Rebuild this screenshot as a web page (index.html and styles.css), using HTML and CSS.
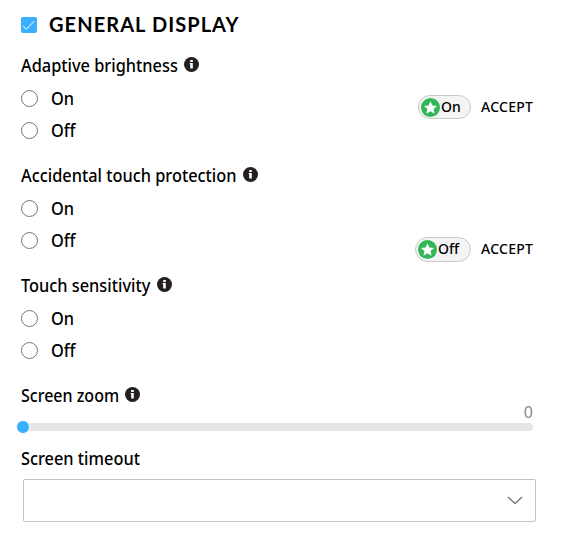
FILE: index.html
```html
<!DOCTYPE html>
<html lang="en">
<head>
<meta charset="utf-8">
<title>General display</title>
<link rel="stylesheet" href="styles.css">
</head>
<body>
<svg width="0" height="0" class="defs" aria-hidden="true">
  <symbol id="info" viewBox="0 0 15 15"><circle cx="7.5" cy="7.5" r="7.5" fill="#231f20"/><path d="M6.2 3h2.6v2H6.2zM5.7 6h3.1v5.5H6.2V7.2h-.5z" fill="#fff"/></symbol>
  <symbol id="star" viewBox="0 0 18 18"><circle cx="9" cy="9" r="9" fill="#31b658"/><path d="M9 3l1.8 4.1 4.4.4-3.3 3 1 4.4L9 12.6l-3.9 2.3 1-4.4-3.3-3 4.4-.4z" fill="#fff"/></symbol>
</svg>
<main class="panel">
  <header class="heading">
    <span class="check"><svg width="16" height="16" viewBox="0 0 16 16"><path d="M2.2 9.2l3.2 3 8-8.2" fill="none" stroke="#fff"/></svg></span>
    <h1>GENERAL DISPLAY</h1>
  </header>
  <section class="group">
    <h2 class="brightness"><span>Adaptive brightness</span><svg class="info"><use href="#info"/></svg></h2>
    <div class="body">
      <div class="options">
        <label class="option"><i></i><span>On</span></label>
        <label class="option"><i></i><span>Off</span></label>
      </div>
      <div class="suggest first"><span class="chip"><svg class="star"><use href="#star"/></svg><b>On</b></span><a>ACCEPT</a></div>
    </div>
  </section>
  <section class="group">
    <h2 class="touch"><span>Accidental touch protection</span><svg class="info"><use href="#info"/></svg></h2>
    <div class="body">
      <div class="options">
        <label class="option"><i></i><span>On</span></label>
        <label class="option"><i></i><span>Off</span></label>
      </div>
      <div class="suggest second"><span class="chip wide"><svg class="star"><use href="#star"/></svg><b>Off</b></span><a>ACCEPT</a></div>
    </div>
  </section>
  <section class="group">
    <h2 class="sensitivity"><span>Touch sensitivity</span><svg class="info"><use href="#info"/></svg></h2>
    <div class="options">
      <label class="option"><i></i><span>On</span></label>
      <label class="option"><i></i><span>Off</span></label>
    </div>
  </section>
  <section class="zoom">
    <h2 class="scale"><span>Screen zoom</span><svg class="info"><use href="#info"/></svg></h2>
    <output>0</output>
    <div class="track"><span class="thumb"></span></div>
  </section>
  <section class="timeout">
    <h2><span>Screen timeout</span></h2>
    <div class="select"><svg width="16" height="9" viewBox="0 0 16 9"><path d="M1 1l7 6.5L15 1" fill="none" stroke="#777" stroke-width="1.3"/></svg></div>
  </section>
</main>
</body>
</html>
```
FILE: styles.css
```css
* { box-sizing: border-box; }
body {
  margin: 0;
  background: #fff;
  color: #000;
  font-family: "Noto Sans", sans-serif;
  font-size: 18px;
}
.defs { position: absolute; }
.panel { width: 536px; padding-left: 21px; }
.heading { display: flex; align-items: center; height: 49px; }
.check { width: 16px; height: 16px; border-radius: 2px; background: #38b0ff; }
.check svg { display: block; }
h1 {
  margin: -1px 0 0 12px;
  font: 700 20px/24px Lato, sans-serif;
  letter-spacing: 1.07px;
  white-space: nowrap;
}
h2 {
  display: flex;
  align-items: center;
  height: 33px;
  margin: 0;
  font-size: 18px;
  font-weight: 500;
  white-space: nowrap;
}
/* condensed lettering */
h2 span, .option span { transform: scaleX(.908); transform-origin: left; }
h2 span { width: 100%; margin-top: -2px; }
.brightness span { width: 157px; }
.touch span { width: 216px; }
.sensitivity span { width: 130px; }
.scale span { width: 98px; transform: scaleX(.89); }
.info { flex: none; width: 15px; height: 15px; margin: -2px 0 0 6px; }
.group { height: 110px; }
.body { display: flex; justify-content: space-between; height: 77px; padding-right: 2px; }
.option {
  display: flex;
  align-items: center;
  height: 32px;
  font-weight: 500;
}
.option i { width: 17px; height: 17px; margin-right: 13px; border: 1px solid #757575; border-radius: 50%; }
.suggest { display: flex; align-items: center; gap: 10px; height: 24px; font-size: 14px; font-weight: 500; }
.first { margin-top: 13px; }
.second { margin-top: 45px; height: 25px; }
.chip {
  display: flex;
  align-items: center;
  width: 53px;
  height: 100%;
  padding-left: 2px;
  border: 1px solid #c9c9c9;
  border-radius: 13px;
  background: #f4f4f4;
}
.chip.wide { width: 56px; }
.chip b { font-weight: 500; margin: -2px 0 0 1px; }
.suggest a { width: 53px; margin-top: -2px; letter-spacing: .25px; }
.star { width: 19px; height: 19px; }
.zoom { display: flex; flex-direction: column; height: 63px; }
.zoom output {
  align-self: flex-end;
  margin: -8px 3px 2px 0;
  height: 17px;
  color: #8a8a8a;
  font-size: 16px;
  line-height: 17px;
}
.track { height: 8px; margin-right: 3px; border-radius: 4px; background: #e5e5e5; }
.thumb { display: block; position: relative; left: -5px; top: -3px; width: 14px; height: 14px; border: 1px solid #fff; border-radius: 50%; background: #38b0ff; }
.timeout h2 { height: 37px; padding-bottom: 4px; }
.select {
  display: flex;
  align-items: center;
  justify-content: flex-end;
  height: 43px;
  margin-left: 2px;
  padding-right: 12px;
  border: 1px solid #c4c4c4;
  border-radius: 2px;
}
```
